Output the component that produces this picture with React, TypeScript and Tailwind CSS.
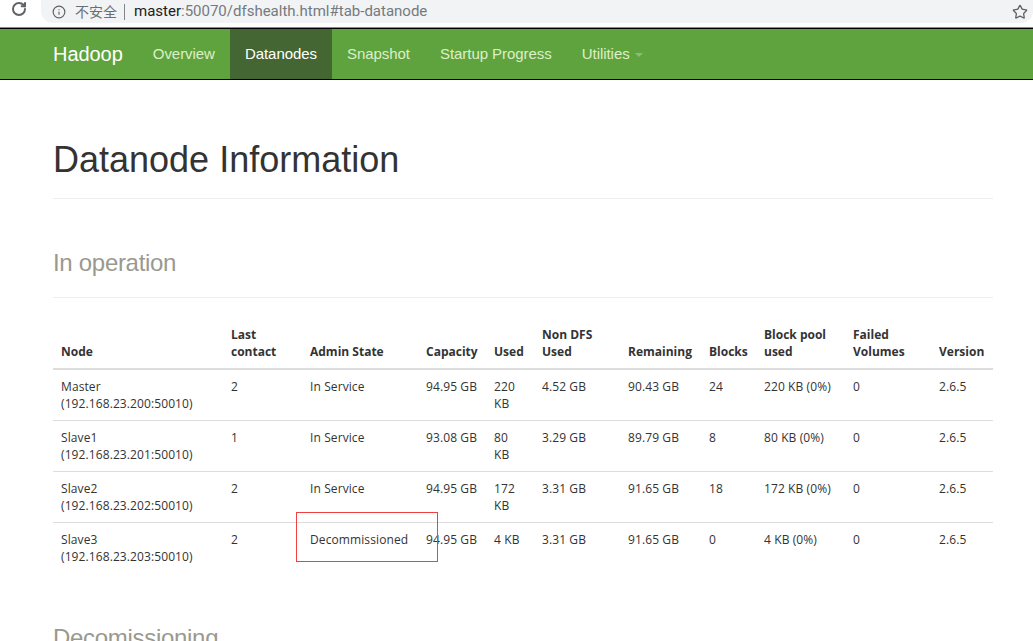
import { Info, RotateCw, Star } from "lucide-react";

const NAV = ["Overview", "Datanodes", "Snapshot", "Startup Progress"];

const HEADERS = [
  "Node",
  "Last contact",
  "Admin State",
  "Capacity",
  "Used",
  "Non DFS Used",
  "Remaining",
  "Blocks",
  "Block pool used",
  "Failed Volumes",
  "Version",
];

const ROWS = [
  ["Master", "192.168.23.200:50010", "2", "In Service", "94.95 GB", "220 KB", "4.52 GB", "90.43 GB", "24", "220 KB (0%)", "0", "2.6.5"],
  ["Slave1", "192.168.23.201:50010", "1", "In Service", "93.08 GB", "80 KB", "3.29 GB", "89.79 GB", "8", "80 KB (0%)", "0", "2.6.5"],
  ["Slave2", "192.168.23.202:50010", "2", "In Service", "94.95 GB", "172 KB", "3.31 GB", "91.65 GB", "18", "172 KB (0%)", "0", "2.6.5"],
  ["Slave3", "192.168.23.203:50010", "2", "Decommissioned", "94.95 GB", "4 KB", "3.31 GB", "91.65 GB", "0", "4 KB (0%)", "0", "2.6.5"],
];

const WIDTHS = ["w-[170px]", "w-[79px]", "w-[116px]", "w-[68px]", "w-[48px]", "w-[86px]", "w-[81px]", "w-[55px]", "w-[89px]", "w-[86px]", "w-[62px]"];

export default function App() {
  return (
    <div className="relative h-[641px] w-[1033px] overflow-hidden bg-white font-['Liberation_Sans',sans-serif] text-[#333333]">
      <div className="flex h-[28px] items-start border-b border-[#8a8a8a] bg-white">
        <RotateCw className="ml-[11px] mt-[1px] h-[16px] w-[16px] text-[#5f6368]" strokeWidth={3} />
        <div className="ml-[14px] flex h-[23px] flex-1 items-center rounded-b-[12px] bg-[#f1f3f4] pl-[11px]">
          <Info className="h-[14px] w-[14px] text-[#5f6368]" strokeWidth={2} />
          <span className="ml-[9px] font-['Noto_Sans_CJK_SC',sans-serif] text-[14px] text-[#6b6f73]">不安全</span>
          <span className="ml-[7px] h-[16px] w-px bg-[#80868b]" />
          <span className="ml-[9px] font-['Roboto',sans-serif] text-[15px] text-[#757a7f]">
            <span className="text-[#202124]">master</span>:50070/dfshealth.html#tab-datanode
          </span>
          <Star className="ml-auto mr-[5px] h-[16px] w-[16px] text-[#5f6368]" strokeWidth={2} />
        </div>
      </div>

      <nav className="flex h-[52px] items-stretch border-y border-black bg-[#5fa33e] pl-[53px] text-[15px] tracking-[-0.05px] text-[#ddefc8]">
        <a className="flex items-center pr-[15px] text-[20px] text-white">Hadoop</a>
        {NAV.map((item) => (
          <a
            key={item}
            className={
              item === "Datanodes"
                ? "flex items-center bg-[#446632] px-[15px] text-white"
                : "flex items-center px-[15px]"
            }
          >
            {item}
          </a>
        ))}
        <a className="flex items-center px-[15px]">
          Utilities
          <span className="ml-[5px] mt-[2px] border-x-[4px] border-t-[4px] border-x-transparent border-t-[#8fb87a]" />
        </a>
      </nav>

      <main className="mx-[53px] w-[940px]">
        <div className="mt-[60px] border-b border-[#eeeeee] pb-[18px]">
          <h1 className="text-[36px] leading-[40px] text-[#333333]">Datanode Information</h1>
        </div>
        <div className="mt-[50px] border-b border-[#eeeeee] pb-[20px]">
          <h2 className="text-[24px] leading-[28px] tracking-[-0.3px] text-[#999990]">In operation</h2>
        </div>
        <table className="mt-[28px] w-[940px] table-fixed border-collapse font-['Open_Sans',sans-serif] text-[12px] leading-[17px] tracking-[0.1px]">
          <colgroup>
            {WIDTHS.map((w, i) => (
              <col key={i} className={w} />
            ))}
          </colgroup>
          <thead>
            <tr className="border-b-2 border-[#dddddd]">
              {HEADERS.map((h) => (
                <th key={h} className="px-[8px] pb-[8px] pt-0 text-left align-bottom font-bold tracking-normal">
                  {h}
                </th>
              ))}
            </tr>
          </thead>
          <tbody>
            {ROWS.map((r) => (
              <tr key={r[0]} className="h-[51px] border-b border-[#dddddd] last:border-b-0">
                <td className="p-[8px] align-top">
                  {r[0]}
                  <br />({r[1]})
                </td>
                {r.slice(2, 4).map((c, i) => (
                  <td key={i} className="p-[8px] align-top">{c}</td>
                ))}
                <td className="p-[8px] align-top">{r[4]}</td>
                <td className="py-[8px] pl-[8px] pr-[14px] align-top">{r[5]}</td>
                {r.slice(6).map((c, i) => (
                  <td key={i} className="p-[8px] align-top">{c}</td>
                ))}
              </tr>
            ))}
          </tbody>
        </table>
        <h2 className="mt-[50px] text-[24px] leading-[28px] tracking-[-0.3px] text-[#999990]">Decomissioning</h2>
      </main>

      <div className="absolute left-[296px] top-[512px] h-[50px] w-[142px] border border-[#f04040]" />
    </div>
  );
}
